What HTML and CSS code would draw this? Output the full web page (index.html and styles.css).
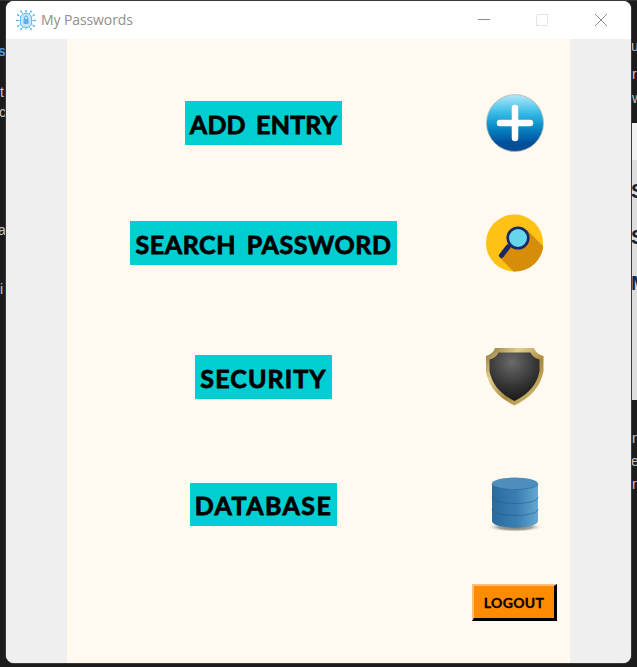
FILE: index.html
```html
<!DOCTYPE html>
<html lang="en">
<head>
<meta charset="utf-8">
<title>My Passwords</title>
<link rel="stylesheet" href="styles.css">
</head>
<body>
<div class="desktop">
  <span class="frag frag-l1">s</span>
  <span class="frag frag-l2">t</span>
  <span class="frag frag-l3">c</span>
  <span class="frag frag-l4">a</span>
  <span class="frag frag-l5">i</span>
  <span class="frag frag-r1">u</span>
  <span class="frag frag-r2">r</span>
  <span class="frag frag-r3">w</span>
  <div class="side-doc">
    <div class="side-doc-head"></div>
    <div class="side-doc-body">
      <span class="doc-glyph">S</span>
      <span class="doc-glyph">S</span>
      <span class="doc-glyph doc-blue">M</span>
    </div>
  </div>
  <span class="frag frag-r4">n</span>
  <span class="frag frag-r5">e</span>
  <span class="frag frag-r6">n</span>
</div>

<main class="window">
  <header class="titlebar">
    <svg class="app-icon" viewBox="0 0 20 20" aria-hidden="true">
      <g stroke="#7cc4f8" stroke-width="1" fill="none" stroke-linecap="round">
        <path d="M7 4 5 1.500M13 4l2-2.500M10 3V.8M5 7 2 5M15 7l3-2M4.500 10.500H1M15.500 10.500H19M5 14l-3 2M15 14l3 2M7 17l-2 2M13 17l2 2M10 18v1.500"/>
      </g>
      <g fill="#5ab4f5">
        <circle cx="5" cy="1.500" r=".9"/><circle cx="15" cy="1.500" r=".9"/><circle cx="10" cy="1" r=".9"/>
        <circle cx="2" cy="5" r=".9"/><circle cx="18" cy="5" r=".9"/><circle cx="1" cy="10.500" r=".9"/><circle cx="19" cy="10.500" r=".9"/>
        <circle cx="2" cy="16" r=".9"/><circle cx="18" cy="16" r=".9"/><circle cx="5" cy="19" r=".9"/><circle cx="15" cy="19" r=".9"/>
      </g>
      <rect x="4.500" y="3.500" width="11" height="14" rx="4.500" fill="#c4e5fc" stroke="#6dbcf6"/>
      <rect x="7.500" y="9" width="5" height="5" rx="1" fill="#5aaeef"/>
      <path d="M8.500 9V7.500a1.500 1.500 0 0 1 3 0V9" fill="none" stroke="#5aaeef"/>
    </svg>
    <h1 class="title">My Passwords</h1>
    <div class="controls">
      <svg class="ctl ctl-min" viewBox="0 0 12 12" aria-hidden="true"><path d="M0 5.500H12" stroke="#8c8c8c"/></svg>
      <svg class="ctl ctl-max" viewBox="0 0 12 12" aria-hidden="true"><rect x=".5" y=".5" width="11" height="11" rx="1.500" fill="none" stroke="#e2e2e2"/></svg>
      <svg class="ctl ctl-close" viewBox="0 0 12 12" aria-hidden="true"><path d="M0 0 12 12M12 0 0 12" stroke="#8c8c8c"/></svg>
    </div>
  </header>

  <div class="client">
    <section class="panel">
      <div class="row row-add">
        <div class="cell-label"><span class="label">ADD ENTRY</span></div>
        <svg class="icon" viewBox="0 0 60 60" aria-hidden="true">
          <defs>
            <linearGradient id="plusFill" x1="0" y1="0" x2="0" y2="1">
              <stop offset="0" stop-color="#b5e8f7"/>
              <stop offset=".3" stop-color="#3fc0e8"/>
              <stop offset=".55" stop-color="#0a8fcb"/>
              <stop offset=".85" stop-color="#014f9c"/>
              <stop offset="1" stop-color="#0a4d92"/>
            </linearGradient>
          </defs>
          <circle cx="30" cy="30" r="28.500" fill="url(#plusFill)" stroke="#b9b7ae" stroke-width=".8"/>
          <path d="M30 15v30M15 30h30" stroke="#fff" stroke-width="6.500" stroke-linecap="round" fill="none"/>
        </svg>
      </div>

      <div class="row row-search">
        <div class="cell-label"><span class="label">SEARCH PASSWORD</span></div>
        <svg class="icon" viewBox="0 0 60 60" aria-hidden="true">
          <defs><clipPath id="disc"><circle cx="30" cy="30" r="28.500"/></clipPath></defs>
          <circle cx="29.500" cy="30" r="28.500" fill="#fec215"/>
          <path clip-path="url(#disc)" d="M42 17 72 47V72H42L15 45Z" fill="#d68d0a"/>
          <path d="M23 34 16.500 42.500" stroke="#1b2767" stroke-width="5" stroke-linecap="round"/>
          <circle cx="33" cy="25" r="10.300" fill="#66d6ec" stroke="#1b2767" stroke-width="2.600"/>
        </svg>
      </div>

      <div class="row row-security">
        <div class="cell-label"><span class="label">SECURITY</span></div>
        <svg class="icon" viewBox="0 0 60 60" aria-hidden="true">
          <defs>
            <linearGradient id="gold" x1="0" y1="0" x2="1" y2="1">
              <stop offset="0" stop-color="#8a7336"/>
              <stop offset=".3" stop-color="#e2cf8c"/>
              <stop offset=".6" stop-color="#a88a3e"/>
              <stop offset="1" stop-color="#e6d28e"/>
            </linearGradient>
            <radialGradient id="steel" cx=".45" cy=".2" r=".85">
              <stop offset="0" stop-color="#6a6a6a"/>
              <stop offset=".6" stop-color="#333"/>
              <stop offset="1" stop-color="#141414"/>
            </radialGradient>
          </defs>
          <path d="M10 1H49Q51 7 58.500 9V24Q55 46 29.500 58.500 4 46 1 24V9Q8 7 10 1Z" fill="url(#gold)"/>
          <path d="M13.500 5.500H45.500Q48 11 54.500 12.500V24Q51 43.500 29.500 54 8 43.500 4.500 24V12.500Q11 11 13.500 5.500Z" fill="url(#steel)"/>
        </svg>
      </div>

      <div class="row row-database">
        <div class="cell-label"><span class="label">DATABASE</span></div>
        <svg class="icon" viewBox="0 0 60 60" aria-hidden="true">
          <defs>
            <linearGradient id="can" x1="0" y1="0" x2="1" y2="0">
              <stop offset="0" stop-color="#2a6a9e"/>
              <stop offset=".55" stop-color="#3a7fb2"/>
              <stop offset="1" stop-color="#64a9d2"/>
            </linearGradient>
            <radialGradient id="drop" cx=".5" cy=".5" r=".5">
              <stop offset="0" stop-color="#77776f"/>
              <stop offset=".6" stop-color="#a5a39b"/>
              <stop offset="1" stop-color="#fff9ef" stop-opacity="0"/>
            </radialGradient>
          </defs>
          <ellipse cx="30" cy="52" rx="28" ry="5" fill="url(#drop)"/>
          <path d="M7 9V46C7 50 17.500 52.500 30 52.500S53 50 53 46V9Z" fill="url(#can)"/>
          <ellipse cx="30" cy="8.500" rx="23" ry="6" fill="#4f8ebc"/>
          <path d="M7 9C7 12 17.500 14.500 30 14.500S53 12 53 9" fill="none" stroke="#2a6a9e" stroke-width=".6"/>
          <path d="M7 22C7 26 17.500 28.500 30 28.500S53 26 53 22M7 34C7 38 17.500 40.500 30 40.500S53 38 53 34" fill="none" stroke="#235c8c" stroke-width=".8" stroke-opacity=".7"/>
        </svg>
      </div>

      <div class="row-logout">
        <button class="logout" type="button">LOGOUT</button>
      </div>
    </section>
  </div>
</main>
</body>
</html>
```

FILE: styles.css
```css
* { box-sizing: border-box; }

html, body {
  margin: 0;
  height: 100%;
}

body {
  background: #1c1c1c;
  overflow: hidden;
  font-family: "Liberation Sans", Arial, sans-serif;
}

.desktop {
  position: absolute;
  inset: 0;
  overflow: hidden;
  border-top: 1px solid #333;
}

.frag {
  position: absolute;
  font: 14px/16px "Liberation Sans", sans-serif;
  color: #c8c8c8;
}

.frag-l1 { left: -2px; top: 42px; color: #4f9ae0; font-weight: bold; }
.frag-l2 { left: 0; top: 83px; }
.frag-l3 { left: -1px; top: 103px; }
.frag-l4 { left: -2px; top: 221px; }
.frag-l5 { left: 0; top: 280px; }
.frag-r1 { left: 631px; top: 37px; }
.frag-r2 { left: 632px; top: 65px; }
.frag-r3 { left: 632px; top: 89px; }
.frag-r4 { left: 632px; top: 429px; }
.frag-r5 { left: 631px; top: 452px; }
.frag-r6 { left: 632px; top: 475px; }

.side-doc {
  position: absolute;
  left: 631px;
  top: 122px;
  width: 10px;
  height: 277px;
  border-left: 1px solid #999;
  background: #dedede;
}

.side-doc-head {
  height: 37px;
  background: #f1f1f1;
}

.side-doc-body {
  display: flex;
  flex-direction: column;
  gap: 22px;
  padding: 19px 0 0 0;
}

.doc-glyph {
  font: bold 20px/24px "Liberation Sans", sans-serif;
  color: #15202e;
  margin-left: -1px;
}

.doc-blue { color: #0f2a50; }

.window {
  position: absolute;
  left: 6px;
  top: 1px;
  width: 625px;
  height: 662px;
  display: flex;
  flex-direction: column;
  border-radius: 8px;
  overflow: hidden;
  background: #fff;
  box-shadow: 0 0 0 1px #3a3a3a;
}

.titlebar {
  flex: 0 0 38px;
  display: flex;
  align-items: center;
  background: #fff;
  padding-left: 10px;
}

.app-icon {
  width: 20px;
  height: 20px;
  flex: none;
}

.title {
  margin: 0 0 0 5px;
  font: 400 14px/20px "Open Sans", sans-serif;
  letter-spacing: -.1px;
  color: #8f8f8f;
}

.controls {
  margin-left: auto;
  display: flex;
  align-items: center;
  padding-right: 24px;
  gap: 46px;
}

.ctl {
  width: 12px;
  height: 12px;
  display: block;
  shape-rendering: crispEdges;
}

.ctl-max { margin-right: 1px; }
.ctl-close { shape-rendering: auto; }

.client {
  flex: 1;
  display: flex;
  justify-content: center;
  background: #efefef;
  padding: 0 61px 0 61px;
}

.panel {
  flex: 1;
  background: #fff9ef;
  padding-top: 62px;
  display: flex;
  flex-direction: column;
}

.row {
  display: grid;
  grid-template-columns: 393px 60px;
  grid-template-rows: 44px;
  column-gap: 25px;
  align-items: center;
  height: 44px;
}

.row-add { margin-bottom: 76px; }
.row-search { margin-bottom: 90px; }
.row-security { margin-bottom: 84px; }
.row-database { margin-bottom: 58px; height: 43px; grid-template-rows: 43px; }

.cell-label {
  display: flex;
  justify-content: center;
}

.label {
  display: block;
  padding: 0 5px;
  height: 44px;
  background: #00ced1;
  color: #000;
  font: 700 25px/46px "Lato", sans-serif;
  letter-spacing: .6px;
  word-spacing: 4px;
  white-space: nowrap;
  -webkit-text-stroke: .8px #000;
}

.row-add .label { letter-spacing: .2px; }
.row-security .label { letter-spacing: 1.1px; }
.row-database .label { height: 43px; line-height: 45px; letter-spacing: 1.4px; }

.icon {
  width: 60px;
  height: 60px;
  display: block;
  overflow: visible;
}

.row-logout {
  display: flex;
  justify-content: flex-end;
  padding-right: 13px;
}

.logout {
  width: 85px;
  height: 37px;
  padding: 2px 0 0;
  background: #ff8c00;
  color: #000;
  border-style: solid;
  border-width: 2px 3px 3px 2px;
  border-color: #ffbe73 #000 #000 #ffbe73;
  font: 700 14px/28px "Lato", sans-serif;
  letter-spacing: .3px;
  -webkit-text-stroke: .3px #000;
}
```
